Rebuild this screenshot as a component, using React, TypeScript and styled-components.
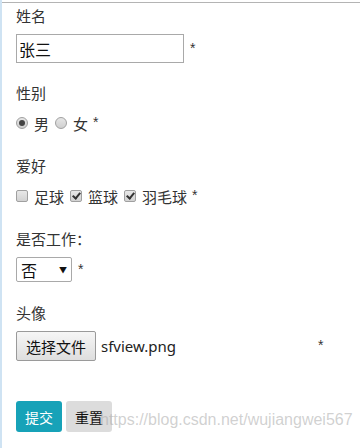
import React from "react";
import styled, { createGlobalStyle } from "styled-components";

const GlobalStyle = createGlobalStyle`
  html, body {
    margin: 0;
    padding: 0;
    background: #ffffff;
  }
  body {
    font-family: "Noto Sans CJK SC", "Noto Sans", sans-serif;
    color: #333333;
  }
`;

const Page = styled.div`
  position: relative;
  width: 360px;
  height: 448px;
  box-sizing: border-box;
  border-left: 2px solid #cfe3f3;
  overflow: hidden;
`;

const TopRule = styled.div`
  height: 1px;
  margin-top: 2px;
  background: #b4b4b4;
`;

const Form = styled.form`
  padding: 2px 0 0 14px;
`;

const Group = styled.div<{ $gap?: number }>`
  margin-bottom: ${(p) => p.$gap ?? 20}px;
`;

const Label = styled.div`
  font-size: 15px;
  line-height: 21px;
  margin-bottom: 8px;
  color: #333;
`;

const Row = styled.div`
  display: flex;
  align-items: center;
  height: 24px;
  font-size: 15px;
  color: #333;
`;

const Star = styled.span<{ $left?: number }>`
  font-family: "Liberation Sans", Arial, sans-serif;
  font-size: 14px;
  color: #333;
  margin-left: ${(p) => p.$left ?? 4}px;
  align-self: center;
  position: relative;
  top: -1px;
`;

const TextInput = styled.input`
  box-sizing: border-box;
  width: 168px;
  height: 29px;
  border: 1px solid #a9a9a9;
  padding: 0 2px;
  font-family: "Noto Sans CJK SC", sans-serif;
  font-size: 16px;
  color: #111;
  outline: none;
  margin-right: 2px;
`;

const InputRow = styled.div`
  display: flex;
  align-items: center;
`;

const Radio = styled.input.attrs({ type: "radio" })`
  appearance: none;
  width: 12px;
  height: 12px;
  margin: 0 6px 0 0;
  border-radius: 50%;
  border: 1px solid #a0a0a0;
  background: linear-gradient(#e6e6e6, #cfcfcf);
  box-sizing: border-box;
  position: relative;

  &:checked::after {
    content: "";
    position: absolute;
    left: 2px;
    top: 2px;
    width: 6px;
    height: 6px;
    border-radius: 50%;
    background: #444;
  }
`;

const Check = styled.input.attrs({ type: "checkbox" })`
  appearance: none;
  width: 12px;
  height: 12px;
  margin: 0 6px 0 0;
  border: 1px solid #a0a0a0;
  border-radius: 2px;
  background: linear-gradient(#e8e8e8, #d2d2d2);
  box-sizing: border-box;
  position: relative;

  &:checked::after {
    content: "";
    position: absolute;
    left: 3px;
    top: 0px;
    width: 3px;
    height: 6px;
    border: solid #333;
    border-width: 0 2px 2px 0;
    transform: rotate(40deg);
  }
`;

const Option = styled.label<{ $last?: boolean }>`
  display: inline-flex;
  align-items: center;
  margin-right: ${(p) => (p.$last ? 0 : 6)}px;
`;

const SelectBox = styled.div`
  position: relative;
  width: 56px;
  height: 25px;
  margin-right: 2px;

  &::after {
    content: "▼";
    position: absolute;
    right: 5px;
    top: 7px;
    font-size: 8px;
    color: #111;
    pointer-events: none;
  }
`;

const Select = styled.select`
  appearance: none;
  width: 100%;
  height: 100%;
  box-sizing: border-box;
  border: 1px solid #a9a9a9;
  border-radius: 2px;
  background: #fff;
  padding: 0 4px;
  font-family: "Noto Sans CJK SC", sans-serif;
  font-size: 16px;
  color: #111;
  outline: none;
`;

const FileRow = styled.div`
  display: flex;
  align-items: center;
  height: 30px;
`;

const FileField = styled.label`
  display: flex;
  align-items: center;
  width: 298px;
`;

const FileButton = styled.span`
  box-sizing: border-box;
  display: inline-flex;
  align-items: center;
  justify-content: center;
  width: 80px;
  height: 30px;
  border: 1px solid #9a9a9a;
  border-radius: 2px;
  background: linear-gradient(#f6f6f6, #dedede);
  font-size: 15px;
  color: #111;
`;

const FileName = styled.span`
  margin-left: 5px;
  font-family: "Noto Sans", sans-serif;
  font-size: 15px;
  color: #222;
`;

const Actions = styled.div`
  display: flex;
  gap: 4px;
`;

const Button = styled.button<{ $primary?: boolean }>`
  box-sizing: border-box;
  width: 46px;
  height: 31px;
  border: none;
  border-radius: 3px;
  font-family: "Noto Sans CJK SC", sans-serif;
  font-size: 14px;
  padding: 0;
  color: ${(p) => (p.$primary ? "#ffffff" : "#111111")};
  background: ${(p) => (p.$primary ? "#17a2b8" : "#dcdcdc")};
`;

const Watermark = styled.div`
  position: absolute;
  left: 98px;
  top: 411px;
  white-space: nowrap;
  font-family: "Liberation Sans", Arial, sans-serif;
  font-size: 16px;
  color: rgba(170, 170, 170, 0.55);
  pointer-events: none;
`;

export default function App() {
  return (
    <>
      <GlobalStyle />
      <Page>
        <TopRule />
        <Form onSubmit={(e) => e.preventDefault()}>
          <Group $gap={19}>
            <Label>姓名</Label>
            <InputRow>
              <TextInput defaultValue="张三" />
              <Star>*</Star>
            </InputRow>
          </Group>

          <Group>
            <Label>性别</Label>
            <Row>
              <Option>
                <Radio name="sex" defaultChecked />男
              </Option>
              <Option $last>
                <Radio name="sex" />女
              </Option>
              <Star $left={5}>*</Star>
            </Row>
          </Group>

          <Group>
            <Label>爱好</Label>
            <Row>
              <Option>
                <Check />足球
              </Option>
              <Option>
                <Check defaultChecked />篮球
              </Option>
              <Option $last>
                <Check defaultChecked />羽毛球
              </Option>
              <Star $left={5}>*</Star>
            </Row>
          </Group>

          <Group>
            <Label>是否工作：</Label>
            <InputRow>
              <SelectBox>
                <Select defaultValue="no">
                  <option value="no">否</option>
                  <option value="yes">是</option>
                </Select>
              </SelectBox>
              <Star>*</Star>
            </InputRow>
          </Group>

          <Group $gap={40}>
            <Label>头像</Label>
            <FileRow>
              <FileField>
                <FileButton>选择文件</FileButton>
                <FileName>sfview.png</FileName>
              </FileField>
              <Star>*</Star>
            </FileRow>
          </Group>

          <Actions>
            <Button $primary type="submit">提交</Button>
            <Button type="reset">重置</Button>
          </Actions>
        </Form>
        <Watermark>https://blog.csdn.net/wujiangwei567</Watermark>
      </Page>
    </>
  );
}
